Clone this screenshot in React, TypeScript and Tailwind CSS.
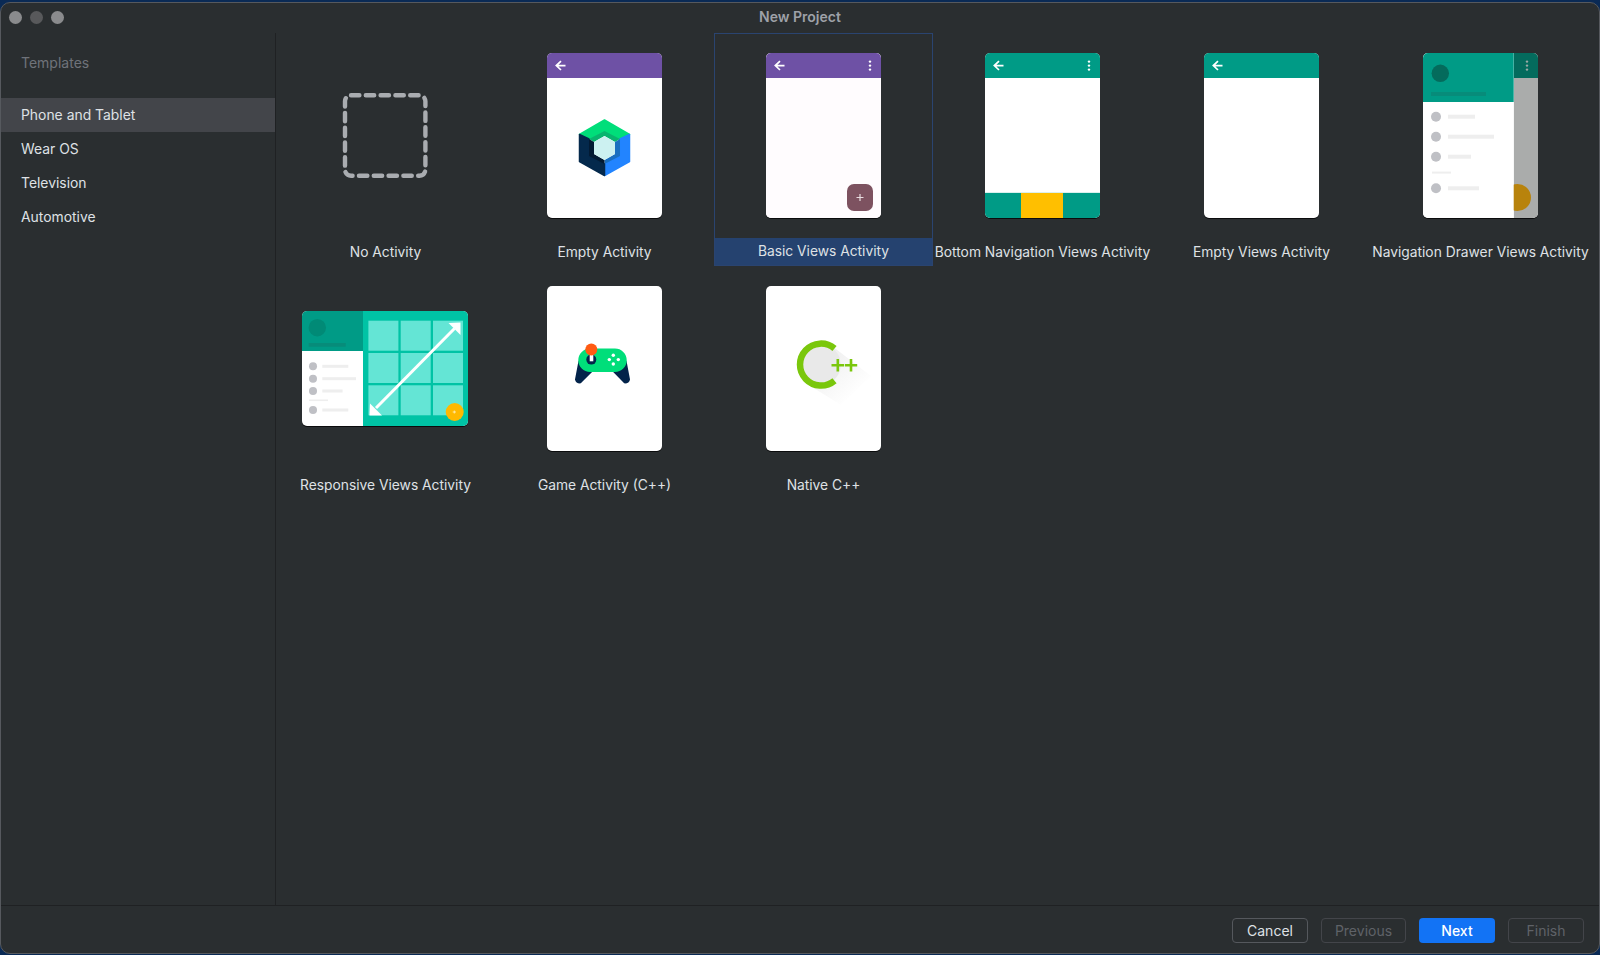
type TemplateItem = {
    name: string;
    thumb: React.ReactNode;
    selected?: boolean;
};

const Back = () => (
    <path
        d="M18.5 12.6H10M14 8.2L9.3 12.6L14 17"
        fill="none"
        stroke="#fff"
        strokeWidth="1.7"
    />
);

const Dots = ({ fill = "#fff" }: { fill?: string }) => (
    <g fill={fill}>
        <circle cx="104" cy="8.6" r="1.2" />
        <circle cx="104" cy="12.6" r="1.2" />
        <circle cx="104" cy="16.6" r="1.2" />
    </g>
);

const PhoneSvg = ({ children }: { children?: React.ReactNode }) => (
    <svg
        viewBox="0 0 115 165"
        className="w-[115px] h-[165px] rounded-[5px] bg-white shadow-[0_1px_0_#0b0c0d]"
    >
        {children}
    </svg>
);

const NoActivity = () => (
    <svg viewBox="0 0 115 165" className="w-[115px] h-[165px]">
        <rect
            x="17"
            y="42.3"
            width="80.4"
            height="80.4"
            rx="6"
            fill="none"
            stroke="#a9acb0"
            strokeWidth="4.4"
            strokeLinecap="round"
            strokeDasharray="8.4 6.4"
        />
    </svg>
);

const EmptyCompose = () => (
    <PhoneSvg>
        <rect width="115" height="25" fill="#6e51a5" />
        <Back />
        <g strokeLinejoin="round" stroke="none">
            <path d="M57.5 67L82.5 81.5L73 86L57.5 78L42 86L32.5 81.5Z" fill="#00de7a" stroke="#00de7a" strokeWidth="1.5" />
            <path d="M82.5 81.5V108.5L57.5 122.5V111L73 103V86Z" fill="#2284ff" stroke="#2284ff" strokeWidth="1.5" />
            <path d="M32.5 81.5V108.5L57.5 122.5V111L42 103V86Z" fill="#04294c" stroke="#04294c" strokeWidth="1.5" />
            <path d="M57.5 78L73 86L68 89L57.5 83L47 89L42 86Z" fill="#08b56f" />
            <path d="M73 86V103L57.5 111V107L68 101V89Z" fill="#1a6fc0" />
            <path d="M42 86V103L57.5 111V107L47 101V89Z" fill="#021a33" />
            <path d="M57.5 83L68 89V101L57.5 107L47 101V89Z" fill="#ccf1f1" />
        </g>
    </PhoneSvg>
);

const BasicViews = () => (
    <PhoneSvg>
        <rect width="115" height="165" fill="#fffcfe" />
        <rect width="115" height="25" fill="#6e51a5" />
        <Back />
        <Dots />
        <rect x="81" y="131" width="26" height="27" rx="7" fill="#7d5260" />
        <path d="M94 141V148M90.5 144.5H97.5" stroke="#e8dde0" strokeWidth="1.2" />
    </PhoneSvg>
);

const BottomNav = () => (
    <PhoneSvg>
        <rect width="115" height="25" fill="#009b86" />
        <Back />
        <Dots />
        <rect y="139.5" width="115" height="1" fill="#b5e2dc" />
        <rect y="140" width="115" height="25" fill="#009b86" />
        <rect x="36" y="140" width="42" height="25" fill="#ffbf00" />
    </PhoneSvg>
);

const EmptyViews = () => (
    <PhoneSvg>
        <rect width="115" height="25" fill="#009b86" />
        <Back />
    </PhoneSvg>
);

const Drawer = () => (
    <PhoneSvg>
        <rect x="90.7" width="24.3" height="165" fill="#aaacab" />
        <rect x="90.7" width="24.3" height="25" fill="#046b5d" />
        <Dots fill="#9aa8a5" />
        <circle cx="94.5" cy="144.5" r="13.5" fill="#b8830c" />
        <rect width="90.7" height="165" fill="#fff" />
        <rect width="90.7" height="49" fill="#009b86" />
        <circle cx="17.3" cy="20.3" r="8.7" fill="#046b5c" />
        <rect x="8" y="39" width="55" height="4" fill="#078c7a" />
        <g fill="#bfc0c5">
            <circle cx="13" cy="63.7" r="5" />
            <circle cx="13" cy="83.7" r="5" />
            <circle cx="13" cy="103.7" r="5" />
            <circle cx="13" cy="135.3" r="5" />
        </g>
        <g fill="#eeeeee">
            <rect x="25" y="61.7" width="27" height="4" />
            <rect x="25" y="81.7" width="46" height="4" />
            <rect x="25" y="101.7" width="23" height="4" />
            <rect x="9" y="118.6" width="19" height="2" />
            <rect x="25" y="133.3" width="31" height="4" />
        </g>
    </PhoneSvg>
);

const Responsive = () => (
    <svg
        viewBox="0 0 166 115"
        className="w-[166px] h-[115px] mr-px rounded-[5px] bg-white shadow-[0_1px_0_#0b0c0d]"
    >
        <rect x="61" width="105" height="115" fill="#00c3a5" />
        <rect width="61" height="40" fill="#009b86" />
        <circle cx="15.3" cy="16.7" r="8.7" fill="#018a76" />
        <rect x="6.7" y="32" width="37" height="3.7" fill="#078c7a" />
        <g fill="#bfc0c5">
            <circle cx="11" cy="55.3" r="4" />
            <circle cx="11" cy="67.7" r="4" />
            <circle cx="11" cy="80" r="4" />
            <circle cx="11" cy="99" r="4" />
        </g>
        <g fill="#eeeeee">
            <rect x="20.3" y="53.8" width="26" height="3" />
            <rect x="20.3" y="66.2" width="33.7" height="3" />
            <rect x="20.3" y="78.5" width="20.3" height="3" />
            <rect x="7" y="88.5" width="19" height="1.6" />
            <rect x="20.3" y="97.5" width="26" height="3" />
        </g>
        <g fill="#64e5d5">
            <rect x="66.4" y="9.7" width="30" height="30" />
            <rect x="98.7" y="9.7" width="30" height="30" />
            <rect x="131" y="9.7" width="30" height="30" />
            <rect x="66.4" y="42" width="30" height="30" />
            <rect x="98.7" y="42" width="30" height="30" />
            <rect x="131" y="42" width="30" height="30" />
            <rect x="66.4" y="74.3" width="30" height="30" />
            <rect x="98.7" y="74.3" width="30" height="30" />
            <rect x="131" y="74.3" width="30" height="30" />
        </g>
        <path d="M152.5 17.5L74 97" stroke="#fff" strokeWidth="3" />
        <path d="M158.5 11.5V24L146.5 12Z" fill="#fff" />
        <path d="M67.5 104.5H80L68 92.5Z" fill="#fff" />
        <circle cx="152.7" cy="101" r="9" fill="#ffb900" />
        <path d="M150.7 101H154M152.3 99.5V102.5" stroke="#fff3c4" strokeWidth="0.8" />
    </svg>
);

const GameActivity = () => (
    <PhoneSvg>
        <g fill="#03234a" stroke="#03234a" strokeWidth="3" strokeLinejoin="round">
            <path d="M32.8 76L29.5 93.5Q30 96 33 96L46 83Z" />
            <path d="M78.2 76L81.5 93.5Q81 96 78 96L65.3 83Z" />
        </g>
        <rect x="31.3" y="62.6" width="48.4" height="23.4" rx="11.7" fill="#00de7a" />
        <circle cx="44.3" cy="73.6" r="5" fill="#03234a" />
        <rect x="42.7" y="66" width="3.6" height="9.3" fill="#fff" />
        <circle cx="44.3" cy="63.6" r="6" fill="#ff5a12" />
        <g fill="#fff">
            <circle cx="66.3" cy="69.3" r="1.7" />
            <circle cx="71.3" cy="73.6" r="1.7" />
            <circle cx="66.3" cy="78" r="1.7" />
            <circle cx="62.3" cy="73.6" r="1.7" />
        </g>
    </PhoneSvg>
);

const NativeCpp = () => (
    <PhoneSvg>
        <defs>
            <linearGradient id="cppShadow" x1="0.2" y1="0.2" x2="0.8" y2="0.8">
                <stop offset="0" stopColor="#eeeeee" />
                <stop offset="1" stopColor="#ffffff" />
            </linearGradient>
        </defs>
        <path d="M66 60L105 90L75 119L38 96Z" fill="url(#cppShadow)" />
        <circle cx="53.7" cy="78.6" r="21" fill="#e9e9e9" />
        <path
            d="M68.5 62.5A21 21 0 1 0 68.5 94.7"
            fill="none"
            stroke="#7ac70c"
            strokeWidth="6.5"
        />
        <path
            d="M65.5 79.3H78M71.8 73V85.6M78.8 79.3H91.2M85 73V85.6"
            stroke="#7ac70c"
            strokeWidth="2.6"
        />
    </PhoneSvg>
);

const templates: TemplateItem[] = [
    { name: "No Activity", thumb: <NoActivity /> },
    { name: "Empty Activity", thumb: <EmptyCompose /> },
    { name: "Basic Views Activity", thumb: <BasicViews />, selected: true },
    { name: "Bottom Navigation Views Activity", thumb: <BottomNav /> },
    { name: "Empty Views Activity", thumb: <EmptyViews /> },
    { name: "Navigation Drawer Views Activity", thumb: <Drawer /> },
    { name: "Responsive Views Activity", thumb: <Responsive /> },
    { name: "Game Activity (C++)", thumb: <GameActivity /> },
    { name: "Native C++", thumb: <NativeCpp /> },
];

const categories = ["Phone and Tablet", "Wear OS", "Television", "Automotive"];

const TemplateTile = ({ name, thumb, selected }: TemplateItem) => {
    return (
        <div
            className={`flex flex-col border ${
                selected ? "border-[#2a4470]" : "border-transparent"
            }`}
        >
            <div className="h-[204px] pt-[19px]">
                <div className="h-[165px] flex items-center justify-center">
                    {thumb}
                </div>
            </div>
            <div
                className={`flex-1 flex items-center justify-center whitespace-nowrap text-[13.8px] text-[#dfe1e5] ${
                    selected ? "bg-[#25426f]" : "pt-[2px]"
                }`}
            >
                {name}
            </div>
        </div>
    );
};

const FooterButton = ({
    label,
    className,
}: {
    label: string;
    className: string;
}) => (
    <button
        className={`h-[25px] rounded-[4px] text-[14px] leading-none ${className}`}
    >
        {label}
    </button>
);

export default function App() {
    return (
        <div
            className="h-[955px] w-[1600px] bg-[#0a2a55] pt-[2px] pb-px overflow-hidden"
            style={{ fontFamily: "Inter, 'Liberation Sans', sans-serif" }}
        >
            <div className="h-full flex flex-col bg-[#2a2e30] border border-[#56595e] rounded-[10px] overflow-hidden">
                <div className="h-[30px] shrink-0 grid grid-cols-3 items-center">
                    <div className="flex gap-2 pl-2 pb-px">
                        <div className="w-[13px] h-[13px] rounded-full bg-[#8a8b8d]"></div>
                        <div className="w-[13px] h-[13px] rounded-full bg-[#58595b]"></div>
                        <div className="w-[13px] h-[13px] rounded-full bg-[#8a8b8d]"></div>
                    </div>
                    <div className="text-center text-[14px] font-semibold text-[#9ea1a8] pb-[3px]">
                        New Project
                    </div>
                </div>

                <div className="flex-1 flex min-h-0 border-b border-[#1f2123]">
                    <div className="w-[275px] shrink-0 border-r border-[#1f2123]">
                        <div className="h-5 mt-[19px] mb-[26px] pl-5 flex items-center text-[14px] text-[#6f737a]">
                            Templates
                        </div>
                        {categories.map((category, index) => (
                            <div
                                key={category}
                                className={`h-[34px] pl-5 flex items-center text-[13.9px] text-[#dfe1e5] ${
                                    index === 0 ? "bg-[#43454a]" : ""
                                }`}
                            >
                                {category}
                            </div>
                        ))}
                    </div>

                    <div className="grid grid-cols-[repeat(6,219px)] auto-rows-[233px] content-start">
                        {templates.map((item) => (
                            <TemplateTile key={item.name} {...item} />
                        ))}
                    </div>
                </div>

                <div className="h-[47px] shrink-0 flex justify-end gap-[13px] pt-3 pr-[15px]">
                    <FooterButton
                        label="Cancel"
                        className="w-[76px] border border-[#55585d] text-[#dfe1e5]"
                    />
                    <FooterButton
                        label="Previous"
                        className="w-[85px] border border-[#43454a] text-[#5f6268]"
                    />
                    <FooterButton
                        label="Next"
                        className="w-[76px] bg-[#1273f5] text-white font-medium"
                    />
                    <FooterButton
                        label="Finish"
                        className="w-[76px] border border-[#43454a] text-[#5f6268]"
                    />
                </div>
            </div>
        </div>
    );
}
